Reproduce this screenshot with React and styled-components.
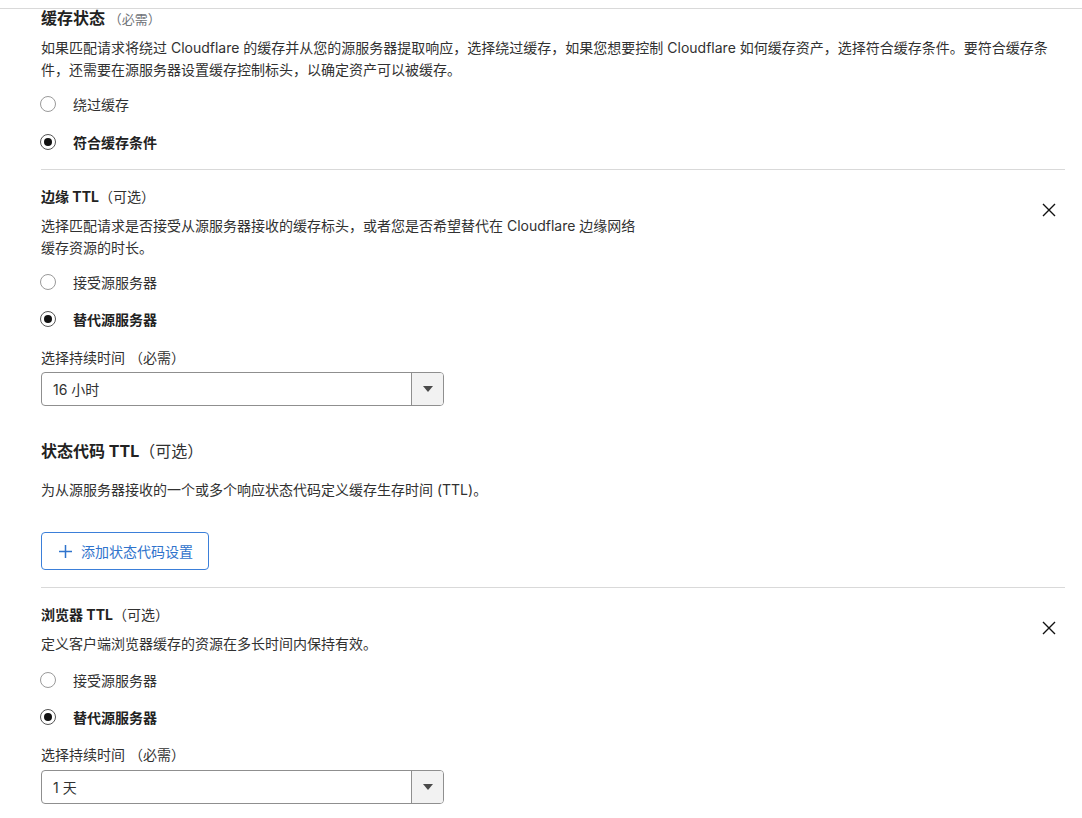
import React from 'react';
import styled, { createGlobalStyle } from 'styled-components';

const GlobalStyle = createGlobalStyle`
  html, body {
    margin: 0;
    padding: 0;
    background: #ffffff;
  }
  body {
    font-family: Inter, "Noto Sans CJK SC", sans-serif;
    color: #313131;
    -webkit-font-smoothing: antialiased;
  }
`;

const Page = styled.div`
  width: 1082px;
`;

const TopBar = styled.div`
  height: 8px;
  border-bottom: 1px solid #d9d9d9;
`;

const Content = styled.div`
  padding: 0 17px 0 41px;
`;

const Section = styled.section`
  display: flex;
  align-items: flex-start;
  padding-top: ${p => p.$top || 0}px;
  padding-bottom: ${p => p.$bottom || 0}px;
  border-bottom: ${p => (p.$divider ? '1px solid #d9d9d9' : 'none')};
`;

const Body = styled.div`
  flex: 1;
  min-width: 0;
`;

const Title = styled.h3`
  margin: ${p => p.$mt || 0}px 0 0;
  font-size: ${p => p.$size || 14}px;
  line-height: ${p => p.$lh || 20}px;
  font-weight: 700;
  color: #222;
`;

const Hint = styled.span`
  font-weight: 400;
  color: ${p => (p.$muted ? '#6f7378' : '#313131')};
  font-size: ${p => p.$size || 14}px;
`;

const Desc = styled.p`
  margin: ${p => p.$mt || 8}px 0 0;
  max-width: ${p => p.$max || 1010}px;
  font-size: 14px;
  line-height: 22px;
  color: #313131;
`;

const RadioGroup = styled.div`
  margin-top: ${p => p.$mt || 12}px;
  display: flex;
  flex-direction: column;
  gap: ${p => p.$gap || 15}px;
`;

const RadioRow = styled.label`
  display: flex;
  align-items: center;
  height: 22px;
  font-size: 14px;
  font-weight: ${p => (p.$checked ? 700 : 400)};
  color: ${p => (p.$checked ? '#222' : '#313131')};
`;

const RadioDot = styled.span`
  box-sizing: border-box;
  width: 16px;
  height: 16px;
  margin: 0 17px 0 -1px;
  border-radius: 50%;
  border: 1px solid ${p => (p.$checked ? '#555' : '#9a9a9a')};
  display: flex;
  align-items: center;
  justify-content: center;
  background: #fff;

  &::after {
    content: '';
    width: 8px;
    height: 8px;
    border-radius: 50%;
    background: #111;
    display: ${p => (p.$checked ? 'block' : 'none')};
  }
`;

const FieldLabel = styled.div`
  margin-top: ${p => p.$mt || 16}px;
  font-size: 14px;
  line-height: 20px;
  color: #313131;
`;

const Select = styled.div`
  margin-top: ${p => p.$mt || 6}px;
  box-sizing: border-box;
  width: 403px;
  height: 34px;
  border: 1px solid #8f8f8f;
  border-radius: 4px;
  display: flex;
  overflow: hidden;
  font-size: 14px;
  color: #313131;
`;

const SelectValue = styled.div`
  flex: 1;
  display: flex;
  align-items: center;
  padding-left: 11px;
`;

const SelectArrow = styled.div`
  width: 31px;
  border-left: 1px solid #8f8f8f;
  background: #f2f2f2;
  display: flex;
  align-items: center;
  justify-content: center;

  &::after {
    content: '';
    border-left: 5px solid transparent;
    border-right: 5px solid transparent;
    border-top: 6px solid #4a4a4a;
  }
`;

const AddButton = styled.button`
  margin-top: 31px;
  box-sizing: border-box;
  height: 38px;
  padding: 0 15px 0 17px;
  display: flex;
  align-items: center;
  gap: 9px;
  border: 1px solid #3b7fd9;
  border-radius: 4px;
  background: #fff;
  color: #2f73cc;
  font-family: inherit;
  font-size: 14px;
`;

const CloseButton = styled.button`
  margin-top: 7px;
  width: 32px;
  height: 32px;
  padding: 0;
  border: none;
  background: transparent;
  display: flex;
  align-items: center;
  justify-content: center;
  color: #111;
`;

const CloseIcon = () => (
  <svg width="14" height="14" viewBox="0 0 14 14" fill="none" stroke="currentColor" strokeWidth="1.4">
    <path d="M1 1l12 12M13 1L1 13" />
  </svg>
);

const PlusIcon = () => (
  <svg width="13" height="13" viewBox="0 0 13 13" fill="none" stroke="currentColor" strokeWidth="1.5">
    <path d="M6.5 0v13M0 6.5h13" />
  </svg>
);

const Radio = ({ label, checked }) => (
  <RadioRow $checked={checked}>
    <RadioDot $checked={checked} />
    {label}
  </RadioRow>
);

const App = () => (
  <Page>
    <GlobalStyle />
    <TopBar />
    <Content>
      {/* 缓存状态 */}
      <Section $divider $bottom={16}>
        <Body>
          <Title $size={16} $mt={-1}>
            缓存状态 <Hint $muted $size={13}>（必需）</Hint>
          </Title>
          <Desc $max={1010}>
            如果匹配请求将绕过 Cloudflare 的缓存并从您的源服务器提取响应，选择绕过缓存，如果您想要控制 Cloudflare 如何缓存资产，选择符合缓存条件。要符合缓存条件，还需要在源服务器设置缓存控制标头，以确定资产可以被缓存。
          </Desc>
          <RadioGroup $mt={12} $gap={16}>
            <Radio label="绕过缓存" />
            <Radio label="符合缓存条件" checked />
          </RadioGroup>
        </Body>
      </Section>

      {/* 边缘 TTL */}
      <Section $top={17}>
        <Body>
          <Title>
            边缘 TTL<Hint>（可选）</Hint>
          </Title>
          <Desc $max={596}>
            选择匹配请求是否接受从源服务器接收的缓存标头，或者您是否希望替代在 Cloudflare 边缘网络缓存资源的时长。
          </Desc>
          <RadioGroup $mt={12}>
            <Radio label="接受源服务器" />
            <Radio label="替代源服务器" checked />
          </RadioGroup>
          <FieldLabel $mt={18}>选择持续时间 （必需）</FieldLabel>
          <Select $mt={4}>
            <SelectValue>16 小时</SelectValue>
            <SelectArrow />
          </Select>
        </Body>
        <CloseButton aria-label="删除">
          <CloseIcon />
        </CloseButton>
      </Section>

      {/* 状态代码 TTL */}
      <Section $divider $bottom={17}>
        <Body>
          <Title $size={16} $lh={22} $mt={34}>
            状态代码 TTL<Hint $size={16}>（可选）</Hint>
          </Title>
          <Desc $mt={17}>为从源服务器接收的一个或多个响应状态代码定义缓存生存时间 (TTL)。</Desc>
          <AddButton>
            <PlusIcon />
            添加状态代码设置
          </AddButton>
        </Body>
      </Section>

      {/* 浏览器 TTL */}
      <Section $top={17}>
        <Body>
          <Title>
            浏览器 TTL<Hint>（可选）</Hint>
          </Title>
          <Desc $mt={8}>定义客户端浏览器缓存的资源在多长时间内保持有效。</Desc>
          <RadioGroup $mt={14}>
            <Radio label="接受源服务器" />
            <Radio label="替代源服务器" checked />
          </RadioGroup>
          <FieldLabel $mt={17}>选择持续时间 （必需）</FieldLabel>
          <Select $mt={5}>
            <SelectValue>1 天</SelectValue>
            <SelectArrow />
          </Select>
        </Body>
        <CloseButton aria-label="删除">
          <CloseIcon />
        </CloseButton>
      </Section>
    </Content>
  </Page>
);

export default App;
